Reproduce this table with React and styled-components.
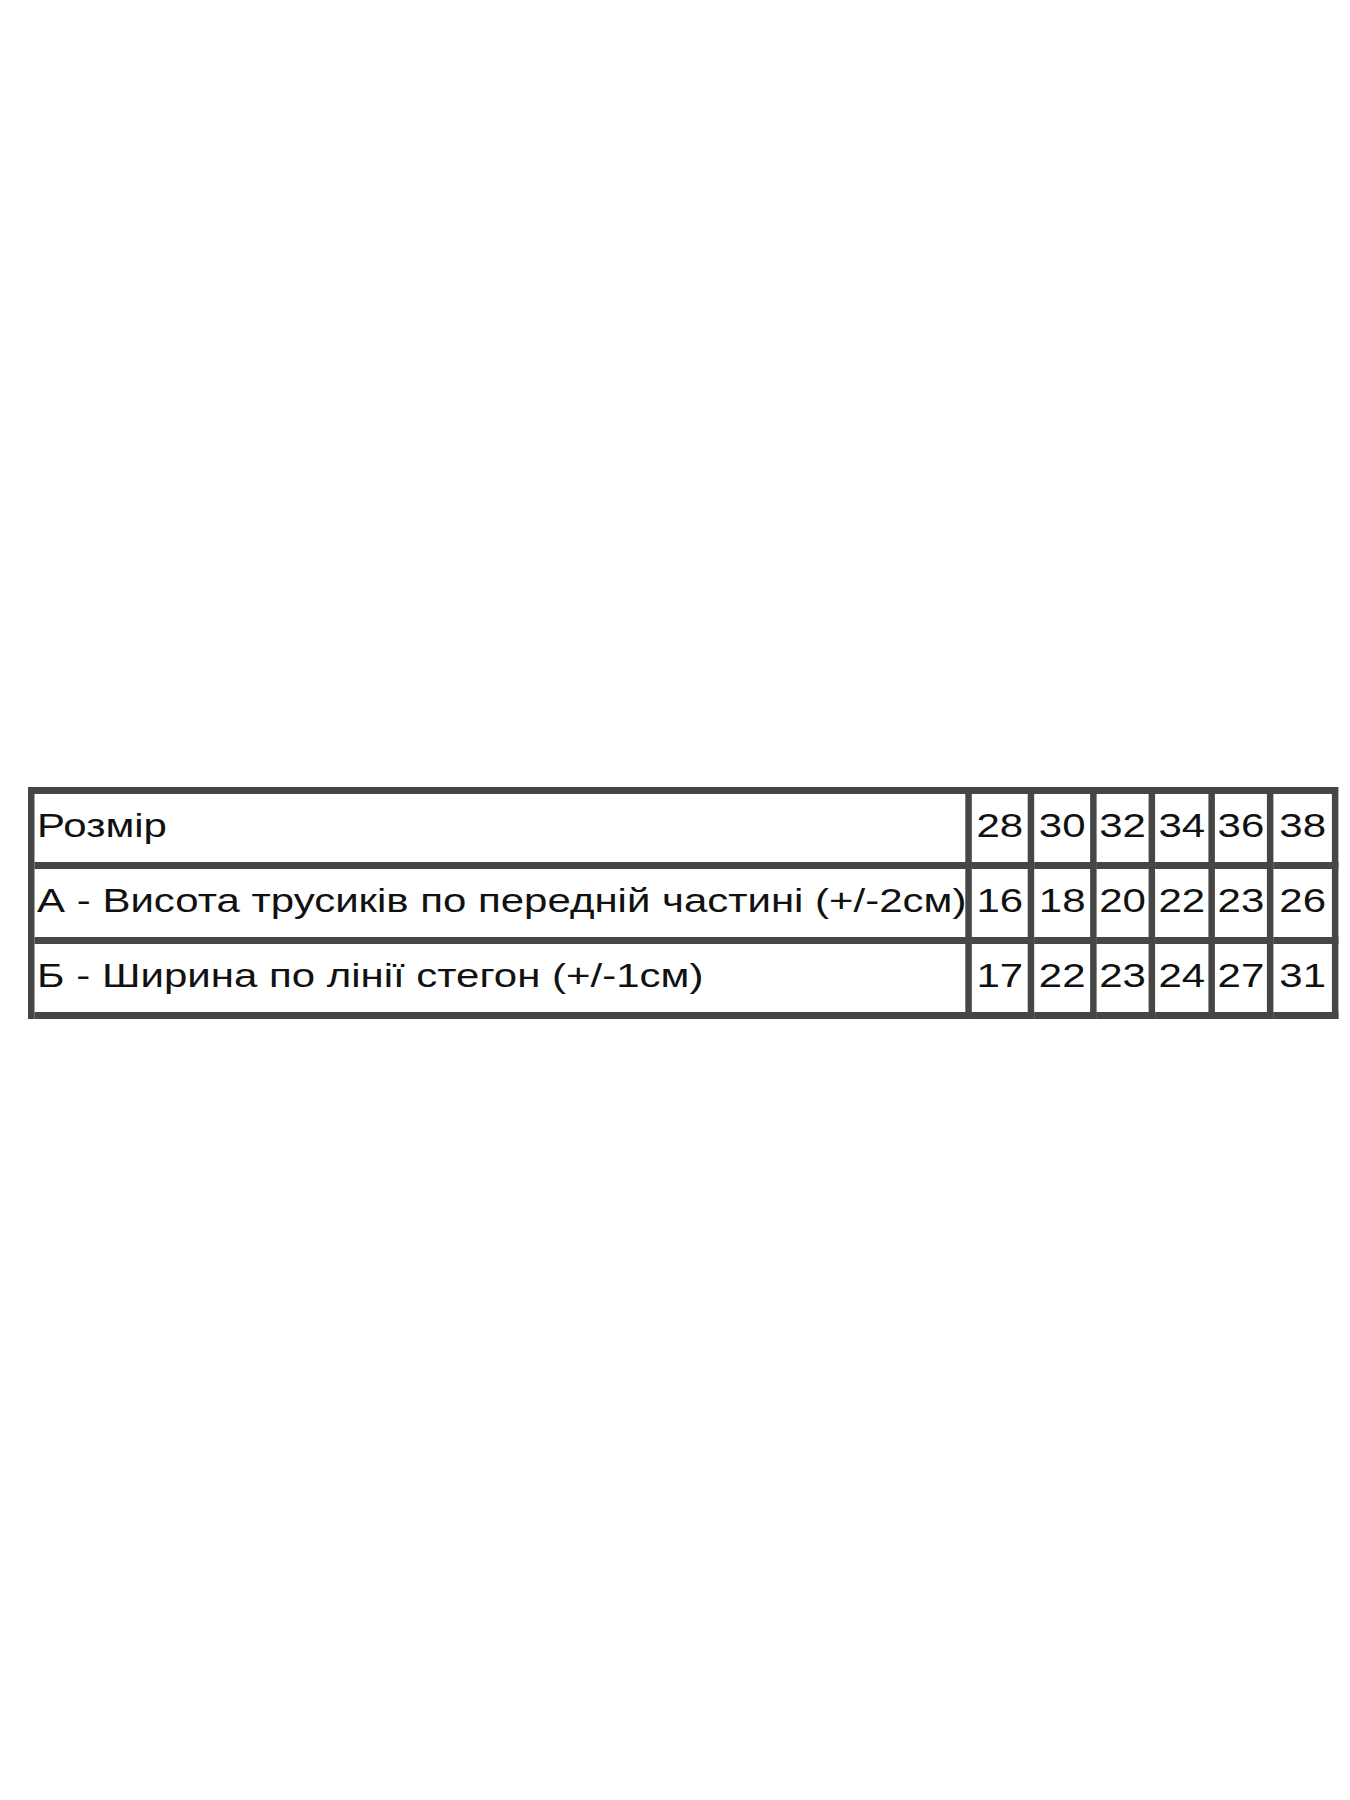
import React from "react";
import styled, { createGlobalStyle } from "styled-components";

const GlobalStyle = createGlobalStyle`
  html, body {
    margin: 0;
    padding: 0;
    background: #ffffff;
  }
  body {
    font-family: "Liberation Sans", Arial, sans-serif;
  }
`;

const Page = styled.div`
  box-sizing: border-box;
  min-height: 1800px;
  padding: 787px 0 0 28px;
  background: #ffffff;
`;

const LINE = "#464646";

const SizeTable = styled.table`
  table-layout: fixed;
  width: 1008px;
  border-collapse: separate;
  border-spacing: 0;
  border-left: 5px solid ${LINE};
  border-top: 7px solid ${LINE};
  transform: scaleX(1.3);
  transform-origin: 0 0;
  font-family: "Liberation Sans", Arial, sans-serif;
  font-size: 32.3px;
  line-height: 37px;
  color: #111111;
`;

const Col = styled.col`
  width: ${(p) => p.$w}px;
`;

const Cell = styled.td`
  box-sizing: border-box;
  padding: 14px ${(p) => (p.$num ? "1px" : "2px")} 17px;
  border-right: 5px solid ${LINE};
  border-bottom: 7px solid ${LINE};
  white-space: nowrap;
  overflow: hidden;
  text-align: ${(p) => (p.$num ? "center" : "left")};
  vertical-align: middle;
`;

const sizes = [28, 30, 32, 34, 36, 38];

const rows = [
  { label: "Розмір", values: sizes },
  {
    label: "А - Висота трусиків по передній частині (+/-2см)",
    values: [16, 18, 20, 22, 23, 26],
  },
  {
    label: "Б - Ширина по лінії стегон (+/-1см)",
    values: [17, 22, 23, 24, 27, 31],
  },
];

const colWidths = [721, 48, 48, 45, 46, 45, 50];

export default function App() {
  return (
    <>
      <GlobalStyle />
      <Page>
        <SizeTable>
          <colgroup>
            {colWidths.map((w, i) => (
              <Col key={i} $w={w} />
            ))}
          </colgroup>
          <tbody>
            {rows.map((r) => (
              <tr key={r.label}>
                <Cell>{r.label}</Cell>
                {r.values.map((v, i) => (
                  <Cell key={i} $num>
                    {v}
                  </Cell>
                ))}
              </tr>
            ))}
          </tbody>
        </SizeTable>
      </Page>
    </>
  );
}
